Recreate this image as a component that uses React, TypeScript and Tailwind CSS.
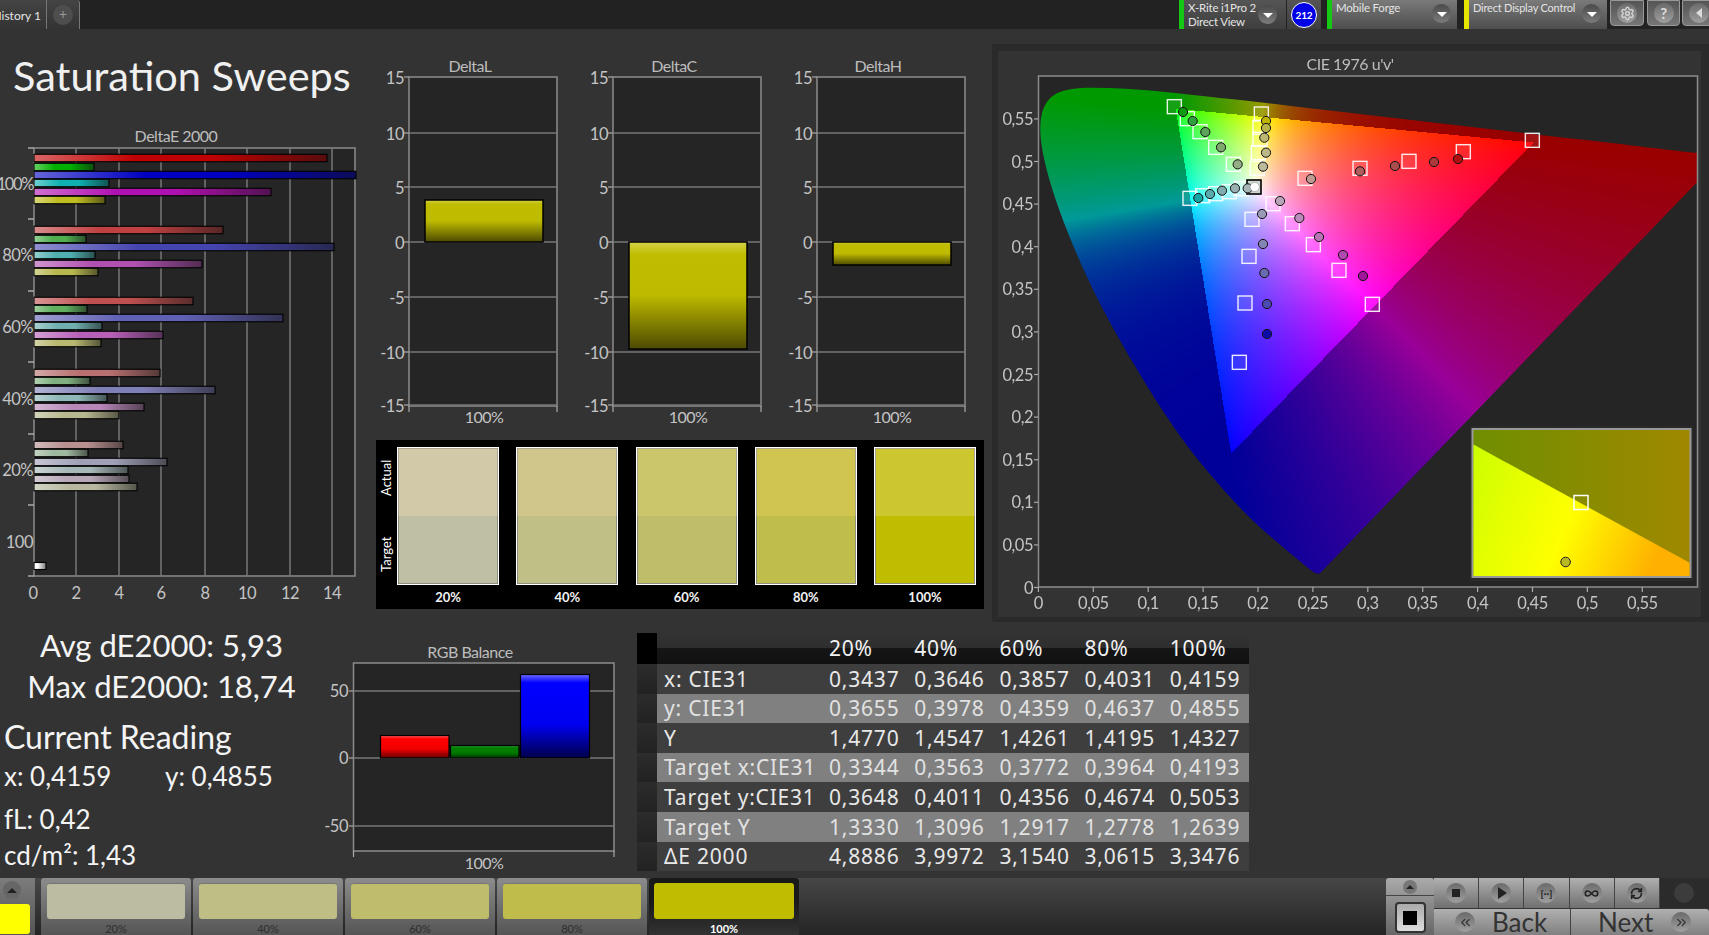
import React, { useEffect, useRef } from 'react'
import { ChevronsLeft, ChevronsRight, Infinity as InfinityIcon, RefreshCw, Settings } from 'lucide-react'

const chartFont = 'Lato, "Open Sans", sans-serif'

// deltaE bars, end x of each bar in page px per saturation step
const deltaRows = [
  { y: [158, 167, 175, 183, 192, 200], ends: [327, 94, 356, 109, 271, 105], cols: ['#c00000', '#00b000', '#0000c0', '#10b0b0', '#b010b0', '#bfbd20'] },
  { y: [230, 239, 247, 255, 264, 272], ends: [223, 86, 334, 95, 202, 98], cols: ['#bf4040', '#50b050', '#4545b0', '#50b0b0', '#b050b0', '#b8b850'] },
  { y: [301, 309, 318, 326, 335, 343], ends: [193, 87, 283, 102, 163, 101], cols: ['#bf5050', '#60b060', '#6060b5', '#70b0b0', '#b860b8', '#b8b870'] },
  { y: [373, 381, 390, 398, 407, 415], ends: [160, 90, 215, 107, 144, 119], cols: ['#b87070', '#80b080', '#8080b8', '#90b8b8', '#b888b8', '#b8b890'] },
  { y: [445, 453, 462, 470, 479, 487], ends: [123, 88, 167, 128, 129, 137], cols: ['#b89090', '#a0b8a0', '#a0a0b8', '#a8b8b8', '#b8a8b8', '#b8b8a0'] },
]

function shade(hex: string, mix: number, to: number) {
  const n = parseInt(hex.slice(1), 16)
  const ch = [(n >> 16) & 255, (n >> 8) & 255, n & 255].map(c => Math.round(c + (to - c) * mix))
  return `rgb(${ch.join(',')})`
}

function DeltaEChart() {
  const grid = [76, 119, 161, 205, 247, 290, 332]
  const ticks = [148, 219, 291, 362, 434, 505, 576]
  const rowLabels = [['100%', 190], ['80%', 261], ['60%', 333], ['40%', 405], ['20%', 476], ['100', 548]]
  let n = 0
  return (
    <svg width="372" height="500" viewBox="0 108 372 500" style={{ fontFamily: chartFont, letterSpacing: '-0.5px' }}>
      <defs>
        {deltaRows.flatMap(r => r.cols.map(c => (
          <linearGradient key={c} id={'bar' + c.slice(1)} x1="0" x2="1" y1="0" y2="0">
            <stop offset="0" stopColor={shade(c, 0.4, 255)} />
            <stop offset="0.35" stopColor={c} />
            <stop offset="0.6" stopColor={c} />
            <stop offset="1" stopColor={shade(c, 0.6, 20)} />
          </linearGradient>
        )))}
        <linearGradient id="barWhite" x1="0" x2="1" y1="0" y2="0">
          <stop offset="0.3" stopColor="#fff" />
          <stop offset="1" stopColor="#777" />
        </linearGradient>
      </defs>
      <text x="176" y="142" textAnchor="middle" fontSize="16" fill="#bdbdbd">DeltaE 2000</text>
      <rect x="34" y="148" width="321" height="428" fill="#252525" stroke="#8c8c8c" strokeWidth="1.5" />
      {grid.map(x => <line key={x} x1={x} x2={x} y1="148" y2="576" stroke="#777" strokeWidth="1.5" />)}
      {ticks.map(y => <line key={y} x1="28" x2="34" y1={y} y2={y} stroke="#aaa" strokeWidth="1.5" />)}
      {deltaRows.flatMap(r => r.y.map((y, i) => {
        n++
        return <rect key={n} x="34" y={y - 3.75} width={r.ends[i] - 34} height="7.5" fill={`url(#bar${r.cols[i].slice(1)})`} stroke="#000" strokeWidth="1.1" />
      }))}
      <rect x="34" y="562.5" width="12" height="7" fill="url(#barWhite)" stroke="#000" strokeWidth="1.1" />
      {rowLabels.map(([t, y]) => (
        <text key={t} x="33" y={y} textAnchor="end" fontSize="16.5" fill="#c4c4c4" letterSpacing={t === '100%' ? '-1.4' : '-0.5'}>{t}</text>
      ))}
      {[0, 2, 4, 6, 8, 10, 12, 14].map((v, i) => (
        <text key={v} x={i === 0 ? 33 : grid[i - 1]} y="599" textAnchor="middle" fontSize="16.5" fill="#c4c4c4">{v}</text>
      ))}
    </svg>
  )
}

function DeltaChart({ title, top, bottom }: { title: string; top: number; bottom: number }) {
  const id = 'yb' + title
  const lines: [string, number][] = [['15', 48], ['10', 104], ['5', 158], ['0', 213], ['-5', 268], ['-10', 323], ['-15', 376]]
  return (
    <svg width="204" height="411" viewBox="0 0 204 411" style={{ fontFamily: chartFont, letterSpacing: '-0.5px' }}>
      <defs>
        <linearGradient id={id} x1="0" x2="0" y1="0" y2="1">
          <stop offset="0" stopColor="#d4d24a" />
          <stop offset={bottom - top > 60 ? 0.12 : 0.1} stopColor="#c0bd00" />
          <stop offset="0.5" stopColor="#bdba00" />
          <stop offset="1" stopColor="#4c4a00" />
        </linearGradient>
      </defs>
      <text x="98" y="43" textAnchor="middle" fontSize="16" fill="#bdbdbd">{title}</text>
      <rect x="37" y="48" width="148" height="329" fill="#252525" stroke="#8c8c8c" strokeWidth="1.5" />
      {lines.map(([t, y]) => (
        <g key={t}>
          <line x1="37" x2="185" y1={y} y2={y} stroke="#777" strokeWidth="1.5" />
          <line x1="32" x2="37" y1={y} y2={y} stroke="#aaa" strokeWidth="1.2" />
          <text x="32" y={y + 7} textAnchor="end" fontSize="16.5" fill="#c4c4c4">{t}</text>
        </g>
      ))}
      <line x1="37" x2="37" y1="377" y2="383" stroke="#aaa" strokeWidth="1.2" />
      <line x1="185" x2="185" y1="377" y2="383" stroke="#aaa" strokeWidth="1.2" />
      <rect x="53" y={top} width="118" height={bottom - top} fill={`url(#${id})`} stroke="#000" strokeWidth="1.5" />
      <text x="112" y="394" textAnchor="middle" fontSize="16" fill="#c4c4c4">100%</text>
    </svg>
  )
}

function RgbChart() {
  return (
    <svg width="305" height="256" viewBox="325 622 305 256" style={{ fontFamily: chartFont, letterSpacing: '-0.5px' }}>
      <defs>
        <linearGradient id="rgbR" x1="0" x2="0" y1="0" y2="1">
          <stop offset="0" stopColor="#ff5a5a" />
          <stop offset="0.15" stopColor="#ff0000" />
          <stop offset="0.6" stopColor="#f00000" />
          <stop offset="1" stopColor="#660000" />
        </linearGradient>
        <linearGradient id="rgbG" x1="0" x2="0" y1="0" y2="1">
          <stop offset="0" stopColor="#2a9a2a" />
          <stop offset="0.2" stopColor="#008000" />
          <stop offset="0.6" stopColor="#007800" />
          <stop offset="1" stopColor="#003300" />
        </linearGradient>
        <linearGradient id="rgbB" x1="0" x2="0" y1="0" y2="1">
          <stop offset="0" stopColor="#6a6aff" />
          <stop offset="0.1" stopColor="#0000ff" />
          <stop offset="0.6" stopColor="#0000f0" />
          <stop offset="1" stopColor="#00004a" />
        </linearGradient>
      </defs>
      <text x="470" y="658" textAnchor="middle" fontSize="16" fill="#bdbdbd">RGB Balance</text>
      <rect x="353.5" y="663" width="260.5" height="188" fill="#252525" stroke="#8c8c8c" strokeWidth="1.5" />
      {[['50', 691], ['0', 758], ['-50', 826]].map(([t, y]) => (
        <g key={t}>
          <line x1="353.5" x2="614" y1={y} y2={y} stroke="#777" strokeWidth="1.5" />
          <line x1="349" x2="353.5" y1={y} y2={y} stroke="#aaa" strokeWidth="1.2" />
          <text x="348" y={Number(y) + 6} textAnchor="end" fontSize="16.5" fill="#c4c4c4">{t}</text>
        </g>
      ))}
      <line x1="353.5" x2="353.5" y1="851" y2="857" stroke="#aaa" strokeWidth="1.2" />
      <line x1="614" x2="614" y1="851" y2="857" stroke="#aaa" strokeWidth="1.2" />
      <rect x="380.5" y="735.5" width="68.5" height="22.5" fill="url(#rgbR)" stroke="#000" strokeWidth="1.2" />
      <rect x="450.5" y="745.5" width="68.5" height="12.5" fill="url(#rgbG)" stroke="#000" strokeWidth="1.2" />
      <rect x="520.5" y="674.5" width="69" height="83.5" fill="url(#rgbB)" stroke="#000" strokeWidth="1.2" />
      <text x="484" y="869" textAnchor="middle" fontSize="16" fill="#c4c4c4">100%</text>
    </svg>
  )
}

// CIE 1931 spectral locus, xy
const locus = [
  [0.1741, 0.005], [0.1733, 0.0048], [0.1714, 0.0051], [0.1689, 0.0069], [0.1644, 0.0109], [0.1566, 0.0177], [0.144, 0.0297],
  [0.1241, 0.0578], [0.1096, 0.0868], [0.0913, 0.1327], [0.0687, 0.2007], [0.0454, 0.295], [0.0235, 0.4127], [0.0082, 0.5384], [0.0039, 0.6548], [0.0139, 0.7502], [0.0389, 0.812],
  [0.0743, 0.8338], [0.1142, 0.8262], [0.1547, 0.8059], [0.2296, 0.7543], [0.3016, 0.6923], [0.3731, 0.6245], [0.4441, 0.5547],
  [0.5125, 0.4866], [0.5752, 0.4242], [0.627, 0.3725], [0.6658, 0.334], [0.6915, 0.3083], [0.7079, 0.292], [0.719, 0.2809],
  [0.726, 0.274], [0.7347, 0.2653],
]

const PLOT_W = 660
const PLOT_H = 511
const pxU = (u: number) => u * 1098
const pxV = (v: number) => 511.5 - v * 852

function GamutCanvas() {
  const ref = useRef<HTMLCanvasElement>(null)
  useEffect(() => {
    const ctx = ref.current?.getContext('2d')
    if (!ctx) return
    ctx.fillStyle = '#252525'
    ctx.fillRect(0, 0, PLOT_W, PLOT_H)
    const off = document.createElement('canvas')
    off.width = PLOT_W
    off.height = PLOT_H
    const octx = off.getContext('2d')!
    const img = octx.createImageData(PLOT_W, PLOT_H)
    for (let py = 0; py < PLOT_H; py++) {
      for (let px = 0; px < PLOT_W; px++) {
        const u = px / 1098
        const v = Math.max(0.001, (511.5 - py) / 852)
        const d = 6 * u - 16 * v + 12
        const x = (9 * u) / d
        const y = (4 * v) / d
        const X = x / y
        const Z = (1 - x - y) / y
        const r = 3.2406 * X - 1.5372 - 0.4986 * Z
        const g = -0.9689 * X + 1.8758 + 0.0415 * Z
        const b = 0.0557 * X - 0.204 + 1.057 * Z
        const inside = r >= 0 && g >= 0 && b >= 0
        const m = Math.max(r, g, b)
        const k = inside ? 1 : 0.6
        const e = inside ? 0.75 : 1
        const eg = inside ? 0.85 : 1.9 // outer teal falls off to blue quickly in the picture
        const i = (py * PLOT_W + px) * 4
        img.data[i] = 255 * k * Math.pow(Math.max(r, 0) / m, e)
        img.data[i + 1] = 255 * k * Math.pow(Math.max(g, 0) / m, eg)
        img.data[i + 2] = 255 * k * Math.pow(Math.max(b, 0) / m, e)
        img.data[i + 3] = 255
      }
    }
    octx.putImageData(img, 0, 0)
    const pts = locus.map(([x, y]) => {
      const d = -2 * x + 12 * y + 3
      return [pxU((4 * x) / d), pxV((9 * y) / d)]
    })
    ctx.save()
    ctx.beginPath()
    ctx.moveTo(pts[0][0], pts[0][1])
    for (let i = 1; i < pts.length - 1; i++) {
      ctx.quadraticCurveTo(pts[i][0], pts[i][1], (pts[i][0] + pts[i + 1][0]) / 2, (pts[i][1] + pts[i + 1][1]) / 2)
    }
    ctx.lineTo(pts[pts.length - 1][0], pts[pts.length - 1][1])
    ctx.closePath()
    ctx.clip()
    ctx.drawImage(off, 0, 0)
    ctx.restore()
  }, [])
  return <canvas ref={ref} width={PLOT_W} height={PLOT_H} className="absolute left-[40px] top-[25px] block" />
}

// marker positions as read from the picture, page px = 1130 + x/3, 90 + y/3
const squares = [
  [133, 50], [172, 86], [210, 125], [257, 172], [310, 223],
  [394, 72], [390, 112], [390, 148], [385, 188], [382, 235],
  [1207, 151], [1000, 185], [837, 214], [690, 235], [525, 265],
  [727, 643], [627, 541], [550, 464], [487, 401], [429, 341],
  [328, 817], [345, 639], [357, 499], [366, 388],
  [180, 325], [218, 317], [257, 311], [298, 305], [334, 296],
]

const dots: [number, number, string][] = [
  [159, 66, '#0e9a0e'], [188, 93, '#2f9f3f'], [226, 126, '#5aa55a'], [273, 172, '#7ea96c'], [323, 223, '#93ad85'],
  [408, 93, '#bfb500'], [408, 114, '#b9b44a'], [403, 143, '#bcb874'], [408, 188, '#bbb985'], [399, 230, '#bbbb9b'],
  [984, 207, '#b01010'], [912, 216, '#ac3a3a'], [795, 228, '#a84d4d'], [690, 244, '#b05d5d'], [543, 267, '#bf9a90'],
  [699, 558, '#a0169a'], [639, 495, '#b04ab0'], [567, 441, '#b875b5'], [508, 384, '#bb8cbb'], [450, 333, '#b9a5b9'],
  [411, 732, '#0c0ca8'], [411, 642, '#4a4ab0'], [403, 549, '#6a6ab0'], [399, 462, '#8585b5'], [396, 372, '#9a9ab8'],
  [205, 324, '#16a5a5'], [240, 312, '#5aa9ad'], [276, 302, '#80aeb0'], [315, 295, '#98b0b0'], [353, 295, '#a5b5b5'],
]

function CieChart() {
  const labels = ['0', '0,05', '0,1', '0,15', '0,2', '0,25', '0,3', '0,35', '0,4', '0,45', '0,5', '0,55']
  return (
    <svg width="703" height="566" viewBox="998 51 703 566" className="absolute left-0 top-0" style={{ fontFamily: chartFont, letterSpacing: '-0.5px' }}>
      <defs>
        <linearGradient id="inTop" x1="0" x2="1" y1="0" y2="0">
          <stop offset="0" stopColor="#6f8f00" />
          <stop offset="1" stopColor="#a08800" />
        </linearGradient>
        <linearGradient id="inLow" x1="0" x2="1" y1="0" y2="0.25">
          <stop offset="0" stopColor="#ccff00" />
          <stop offset="0.55" stopColor="#ffff00" />
          <stop offset="1" stopColor="#ffb000" />
        </linearGradient>
      </defs>
      <text x="1350" y="70" textAnchor="middle" fontSize="16" fill="#bdbdbd">CIE 1976 u'v'</text>
      <rect x="1038.5" y="76" width="659" height="511" fill="none" stroke="#8c8c8c" strokeWidth="1.5" />
      {labels.map((t, i) => {
        const y = 587.5 - i * 42.6
        return (
          <g key={t}>
            <line x1="1034" x2="1038" y1={y} y2={y} stroke="#aaa" strokeWidth="1.2" />
            <text x="1033" y={y + 6} textAnchor="end" fontSize="16.5" fill="#c4c4c4">{t}</text>
          </g>
        )
      })}
      {labels.map((t, i) => {
        const x = 1038.4 + i * 54.9
        return (
          <g key={t}>
            <line x1={x} x2={x} y1="587" y2="592" stroke="#aaa" strokeWidth="1.2" />
            <text x={x} y="609" textAnchor="middle" fontSize="16.5" fill="#c4c4c4">{t}</text>
          </g>
        )
      })}
      {squares.map(([x, y]) => (
        <rect key={x + '-' + y} x={1130 + x / 3 - 7} y={90 + y / 3 - 7} width="14" height="14" fill="#fff" fillOpacity="0.08" stroke="#fff" strokeWidth="1.4" strokeOpacity="0.9" />
      ))}
      <rect x="1247" y="180" width="14" height="14" fill="#cfd8cf" stroke="#000" strokeWidth="1.6" />
      {dots.map(([x, y, c]) => (
        <circle key={x + '-' + y} cx={1130 + x / 3} cy={90 + y / 3} r="4.6" fill={c} stroke="#111" strokeWidth="1" />
      ))}
      <circle cx="1254.7" cy="187" r="4.6" fill="#fff" stroke="#888" strokeWidth="0.5" />
      <rect x="1470" y="426" width="223" height="155" fill="#2a2a2a" />
      <rect x="1472.5" y="429" width="218" height="148" fill="url(#inTop)" stroke="#999" strokeWidth="2" />
      <polygon points="1473.5,444.5 1689.5,562.7 1689.5,576 1473.5,576" fill="url(#inLow)" />
      <rect x="1574" y="495.5" width="14" height="14" fill="none" stroke="#fff" strokeWidth="1.5" />
      <circle cx="1565.6" cy="562" r="4.8" fill="#b8b820" stroke="#222" strokeWidth="1" />
    </svg>
  )
}

const swatches = [
  { label: '20%', actual: '#d1c9a7', target: '#bfbfa5' },
  { label: '40%', actual: '#d0c68b', target: '#c0bf85' },
  { label: '60%', actual: '#cbc66b', target: '#bfbd69' },
  { label: '80%', actual: '#cfc550', target: '#bfbd4b' },
  { label: '100%', actual: '#cdc72f', target: '#c0bd00' },
]

const tableRows = [
  ['x: CIE31', '0,3437', '0,3646', '0,3857', '0,4031', '0,4159'],
  ['y: CIE31', '0,3655', '0,3978', '0,4359', '0,4637', '0,4855'],
  ['Y', '1,4770', '1,4547', '1,4261', '1,4195', '1,4327'],
  ['Target x:CIE31', '0,3344', '0,3563', '0,3772', '0,3964', '0,4193'],
  ['Target y:CIE31', '0,3648', '0,4011', '0,4356', '0,4674', '0,5053'],
  ['Target Y', '1,3330', '1,3096', '1,2917', '1,2778', '1,2639'],
  ['ΔE 2000', '4,8886', '3,9972', '3,1540', '3,0615', '3,3476'],
]

function Dropdown() {
  return (
    <div className="flex size-[19px] shrink-0 items-center justify-center rounded-full bg-linear-to-b from-[#4a4a4a] to-[#7c7c7c]">
      <div className="mt-[2px] h-0 w-0 border-x-[5px] border-t-[5px] border-x-transparent border-t-white" />
    </div>
  )
}

function RoundIcon({ children }: { children?: React.ReactNode }) {
  return (
    <div className="flex size-[20px] shrink-0 items-center justify-center rounded-full bg-linear-to-b from-[#6a6a6a] to-[#a0a0a0]">
      {children}
    </div>
  )
}

function TopBar() {
  return (
    <div className="flex h-[29px] shrink-0 justify-between bg-[#222222] text-[11.5px] leading-[14px] text-[#e4e4e4]">
      <div className="flex h-full">
        <div className="flex w-[47px] items-center justify-end overflow-hidden whitespace-nowrap border-r border-[#777] bg-linear-to-b from-[#444] to-[#333] pr-[5px] pt-[2px] text-[12px]" style={{ fontFamily: chartFont }}>
          History 1
        </div>
        <div className="flex w-[33px] items-center justify-center rounded-tr-[3px] border-r border-[#777] bg-linear-to-b from-[#444] to-[#333]">
          <div className="flex size-[20px] items-center justify-center rounded-full bg-[#4e4e4e] text-[14px] text-[#999]">+</div>
        </div>
      </div>
      <div className="flex h-full w-[530px] overflow-hidden tracking-[-0.2px]" style={{ fontFamily: chartFont }}>
        <div className="flex h-full w-[107px] shrink-0 items-center justify-between border-l-[5px] border-[#14c814] bg-linear-to-b from-[#555] to-[#3e3e3e] pl-[4px] pr-[9px]">
          <div className="whitespace-nowrap">X-Rite i1Pro 2<br />Direct View</div>
          <Dropdown />
        </div>
        <div className="ml-[1px] flex h-full w-[34px] shrink-0 items-center justify-center bg-linear-to-b from-[#555] to-[#3e3e3e]">
          <div className="flex size-[26px] items-center justify-center rounded-full border border-white bg-[#0000e6] text-[10px] font-bold text-white">212</div>
        </div>
        <div className="ml-[6px] flex h-full w-[130px] shrink-0 justify-between border-l-[5px] border-[#14c814] bg-linear-to-b from-[#7a7a7a] to-[#4e4e4e] pl-[4px] pr-[6px] pt-[1px]">
          <div className="whitespace-nowrap">Mobile Forge</div>
          <div className="mt-[3px]"><Dropdown /></div>
        </div>
        <div className="ml-[7px] flex h-full w-[143px] shrink-0 justify-between border-l-[5px] border-[#e6e600] bg-linear-to-b from-[#7a7a7a] to-[#4e4e4e] pl-[4px] pr-[6px] pt-[1px] text-[11px]">
          <div className="whitespace-nowrap">Direct Display Control</div>
          <div className="mt-[3px]"><Dropdown /></div>
        </div>
        <div className="ml-[3px] flex h-[26px] w-[34px] shrink-0 items-center justify-center rounded-b-[4px] border border-[#999] bg-linear-to-b from-[#555] to-[#777]">
          <RoundIcon><Settings size={15} color="#cfcfcf" strokeWidth={2.5} /></RoundIcon>
        </div>
        <div className="ml-[3px] flex h-[26px] w-[33px] shrink-0 items-center justify-center rounded-b-[4px] border border-[#999] bg-linear-to-b from-[#555] to-[#777] text-[15px] font-bold text-[#ddd]">
          <RoundIcon>?</RoundIcon>
        </div>
        <div className="ml-[2px] flex h-[26px] w-[33px] shrink-0 items-center justify-center rounded-b-[4px] border border-[#999] bg-linear-to-b from-[#555] to-[#777]">
          <RoundIcon>
            <div className="h-0 w-0 border-y-[5px] border-r-[6px] border-y-transparent border-r-[#ddd]" />
          </RoundIcon>
        </div>
      </div>
    </div>
  )
}

function Transport({ children }: { children: React.ReactNode }) {
  return (
    <div className="flex w-[45.2px] items-center justify-center border-r border-[#444] bg-linear-to-b from-[#b0b0b0] to-[#707070]">
      <RoundIcon>{children}</RoundIcon>
    </div>
  )
}

function BottomBar() {
  const tabs = [
    { label: '20%', col: '#bcbca2' },
    { label: '40%', col: '#bfbe85' },
    { label: '60%', col: '#bfbd6c' },
    { label: '80%', col: '#bfbc4c' },
  ]
  return (
    <div className="flex h-[57px] shrink-0 bg-linear-to-b from-[#474747] to-[#252525]" style={{ fontFamily: chartFont }}>
      <div className="flex w-[35px] shrink-0 flex-col bg-linear-to-b from-[#7c7c7c] to-[#555]">
        <div className="ml-[3px] mt-[3px] flex size-[18px] items-center justify-center rounded-full bg-[#666]">
          <div className="h-0 w-0 border-x-[5px] border-b-[5px] border-x-transparent border-b-[#222]" />
        </div>
        <div className="mt-[5px] h-[30px] w-[30px] rounded-r-[3px] bg-[#ffff00]" />
      </div>
      <div className="ml-[6px] flex gap-[2px]">
        {tabs.map(t => (
          <div key={t.label} className="flex w-[150px] flex-col rounded-t-[3px] bg-linear-to-b from-[#8c8c8c] to-[#555] px-[6px] pt-[5px]">
            <div className="h-[36px] rounded-[3px] border-t border-[#777]" style={{ backgroundColor: t.col }} />
            <div className="pt-[4px] text-center text-[11px] leading-[12px] text-[#2e2e2e]">{t.label}</div>
          </div>
        ))}
        <div className="flex w-[150px] flex-col rounded-t-[4px] bg-linear-to-b from-[#191919] from-40% to-[#333] px-[5px] pt-[5px]">
          <div className="h-[36px] rounded-[3px] bg-[#c0bd00]" />
          <div className="pt-[4px] text-center text-[11px] font-bold leading-[12px] text-white">100%</div>
        </div>
      </div>
      <div className="ml-auto flex w-[323px] shrink-0">
        <div className="flex w-[48px] flex-col items-center rounded-t-[3px] bg-linear-to-b from-[#aaa] to-[#666]">
          <div className="flex h-[18px] w-full items-center justify-center border-b border-[#444]">
            <div className="flex size-[14px] items-center justify-center rounded-full bg-[#777]">
              <div className="h-0 w-0 border-x-[4px] border-b-[4px] border-x-transparent border-b-[#222]" />
            </div>
          </div>
          <div className="mt-[6px] flex size-[31px] items-center justify-center rounded-[4px] border-[2px] border-[#333] bg-linear-to-b from-[#aaa] to-[#ddd]">
            <div className="size-[14px] bg-black" />
          </div>
        </div>
        <div className="flex flex-1 flex-col">
          <div className="flex h-[30px]">
            <Transport><div className="size-[8px] bg-[#222]" /></Transport>
            <Transport><div className="ml-[2px] h-0 w-0 border-y-[6px] border-l-[9px] border-y-transparent border-l-[#222]" /></Transport>
            <Transport><span className="text-[10px] font-bold text-[#222]">[··]</span></Transport>
            <Transport><InfinityIcon size={15} color="#222" strokeWidth={2.5} /></Transport>
            <Transport><RefreshCw size={13} color="#222" strokeWidth={3} /></Transport>
            <div className="flex flex-1 items-center justify-center bg-[#2b2b2b]">
              <div className="size-[20px] rounded-full bg-[#3c3c3c]" />
            </div>
          </div>
          <div className="mt-[1px] flex h-[26px] text-[26px] leading-[26px] text-[#333]">
            <div className="flex w-[137px] items-center border-r border-[#444] bg-linear-to-b from-[#b0b0b0] to-[#808080] pl-[21px]">
              <RoundIcon><ChevronsLeft size={15} color="#333" /></RoundIcon>
              <span className="ml-[17px]">Back</span>
            </div>
            <div className="flex flex-1 items-center rounded-tr-[3px] bg-linear-to-b from-[#b0b0b0] to-[#808080] pl-[27px]">
              <span>Next</span>
              <div className="ml-[18px]"><RoundIcon><ChevronsRight size={15} color="#333" /></RoundIcon></div>
            </div>
          </div>
        </div>
      </div>
    </div>
  )
}

export default function App() {
  return (
    <div className="flex h-[935px] w-[1709px] flex-col overflow-hidden bg-[#333333] text-[#f0f0f0]">
      <TopBar />
      <div className="flex h-[593px] shrink-0">
        <div className="w-[372px] shrink-0" style={{ fontFamily: chartFont }}>
          <div className="flex h-[79px] items-center whitespace-nowrap pl-[13px] pt-[14px] text-[41.5px]">Saturation Sweeps</div>
          <DeltaEChart />
        </div>
        <div className="w-[620px] shrink-0">
          <div className="flex h-[411px]">
            <DeltaChart title="DeltaL" top={171} bottom={213} />
            <DeltaChart title="DeltaC" top={213} bottom={320} />
            <DeltaChart title="DeltaH" top={213} bottom={236} />
          </div>
          <div className="ml-[4px] flex h-[169px] w-[608px] bg-black pr-[8px] pt-[7px]" style={{ fontFamily: chartFont }}>
            <div className="flex h-[138px] w-[21px] shrink-0 flex-col text-[13px] text-white">
              <div className="flex flex-1 items-center justify-center pt-[8px] [writing-mode:vertical-rl] rotate-180">Actual</div>
              <div className="flex flex-1 items-center justify-center pb-[6px] [writing-mode:vertical-rl] rotate-180">Target</div>
            </div>
            <div className="flex flex-1 justify-between">
              {swatches.map(s => (
                <div key={s.label} className="w-[102px]">
                  <div className="flex h-[138px] flex-col border border-white">
                    <div className="flex-1 border-x border-t border-[#aaa493]" style={{ backgroundColor: s.actual }} />
                    <div className="flex-1 border-x border-b border-[#8f8f80]" style={{ backgroundColor: s.target }} />
                  </div>
                  <div className="pt-[5px] text-center text-[13px] font-bold leading-[14px] text-[#f2f2f2]">{s.label}</div>
                </div>
              ))}
            </div>
          </div>
        </div>
        <div className="mt-[15px] h-[578px] w-[717px] shrink-0 bg-[#2a2a2a] pl-[6px] pt-[7px]">
          <div className="relative h-[566px] w-[703px] bg-[#333333]">
            <GamutCanvas />
            <CieChart />
          </div>
        </div>
      </div>
      <div className="flex h-[256px] shrink-0">
        <div className="w-[325px] shrink-0 pl-[4px] pt-[3px] text-[#f4f4f4]" style={{ fontFamily: chartFont }}>
          <div className="w-[315px] text-center text-[31px] leading-[41px]">Avg dE2000: 5,93</div>
          <div className="w-[315px] text-center text-[31px] leading-[41px]">Max dE2000: 18,74</div>
          <div className="mt-[10px] text-[32px] leading-[40px]">Current Reading</div>
          <div className="mt-[1px] flex text-[26px] leading-[36px]">
            <div className="w-[161px]">x: 0,4159</div>
            <div>y: 0,4855</div>
          </div>
          <div className="mt-[7px] text-[26px] leading-[36px]">fL: 0,42</div>
          <div className="text-[26px] leading-[36px]">cd/m²: 1,43</div>
        </div>
        <RgbChart />
        <div className="ml-[7px] mt-[10px] flex h-[239px] w-[612px] flex-col overflow-hidden text-[21px] tracking-[0.8px] text-[#e8e8e8]" style={{ fontFamily: '"Noto Sans", sans-serif' }}>
          <div className="flex h-[32px] shrink-0 items-center bg-[linear-gradient(#333_0,#2e2e2e_50%,#151515_50%,#111_100%)] pt-[1px]">
            <div className="h-full w-[20px] shrink-0 bg-black" />
            <div className="w-[172px] shrink-0" />
            {['20%', '40%', '60%', '80%', '100%'].map(h => <div key={h} className="w-[85.2px] shrink-0 text-[#f2f2f2]">{h}</div>)}
          </div>
          {tableRows.map((r, i) => (
            <div key={r[0]} className={`flex h-[29.6px] shrink-0 items-center ${i % 2 ? 'bg-[#808080] text-[#e2e2e2]' : 'bg-[#3e3e3e]'}`}>
              <div className="h-full w-[20px] shrink-0 bg-linear-to-b from-[#2c2c2c] to-[#222]" />
              <div className="w-[172px] shrink-0 whitespace-nowrap pl-[7px] pt-[1px]">{r[0]}</div>
              {r.slice(1).map((c, j) => <div key={j} className="w-[85.2px] shrink-0 pt-[1px]">{c}</div>)}
            </div>
          ))}
        </div>
      </div>
      <BottomBar />
    </div>
  )
}
